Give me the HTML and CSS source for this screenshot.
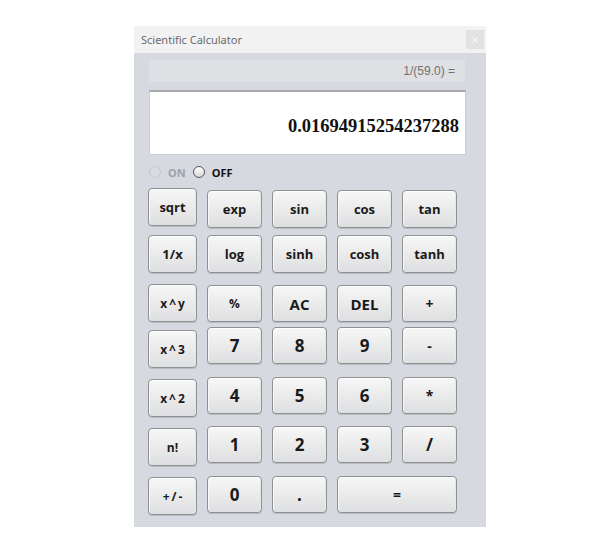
FILE: index.html
```html
<!DOCTYPE html>
<html>
<head>
<meta charset="utf-8">
<link rel="stylesheet" href="styles.css">
</head>
<body>
<div class="window">
  <div class="titlebar">
    <span class="title">Scientific Calculator</span>
    <span class="close">×</span>
  </div>
  <div class="content">
    <div class="expr">1/(59.0) =</div>
    <div class="display">0.01694915254237288</div>
    <div class="power">
      <span class="radio disabled"></span><span class="lbl off-lbl">ON</span>
      <span class="radio"></span><span class="lbl">OFF</span>
    </div>
    <div class="keys">
      <div class="col-left">
        <button class="btn f13">sqrt</button>
        <button class="btn f13">1/x</button>
        <button class="btn f12 spaced">x^y</button>
        <button class="btn f12 spaced">x^3</button>
        <button class="btn f12 spaced">x^2</button>
        <button class="btn f12">n!</button>
        <button class="btn f12 spaced">+/-</button>
      </div>
      <div class="grid">
        <button class="btn f13">exp</button>
        <button class="btn f13">sin</button>
        <button class="btn f13">cos</button>
        <button class="btn f13">tan</button>
        <button class="btn f13">log</button>
        <button class="btn f13">sinh</button>
        <button class="btn f13">cosh</button>
        <button class="btn f13">tanh</button>
        <button class="btn f12">%</button>
        <button class="btn f15">AC</button>
        <button class="btn f15">DEL</button>
        <button class="btn f14">+</button>
        <button class="btn f16">7</button>
        <button class="btn f16">8</button>
        <button class="btn f16">9</button>
        <button class="btn f14">-</button>
        <button class="btn f16">4</button>
        <button class="btn f16">5</button>
        <button class="btn f16">6</button>
        <button class="btn f14">*</button>
        <button class="btn f16">1</button>
        <button class="btn f16">2</button>
        <button class="btn f16">3</button>
        <button class="btn f16">/</button>
        <button class="btn f16">0</button>
        <button class="btn f16">.</button>
        <button class="btn f14 wide">=</button>
      </div>
    </div>
  </div>
</div>
</body>
</html>
```

FILE: styles.css
```css
html, body {
  margin: 0;
  padding: 0;
  background: #ffffff;
}

.window {
  margin-left: 134px;
  margin-top: 26px;
  width: 352px;
  font-family: "Open Sans", "Noto Sans", sans-serif;
}

.titlebar {
  height: 27px;
  background: #f2f2f2;
  display: flex;
  align-items: center;
  justify-content: space-between;
  padding-left: 7px;
  padding-right: 2px;
  box-sizing: border-box;
}

.title {
  font-family: "Noto Sans", "Open Sans", sans-serif;
  font-size: 11px;
  color: #6a6a6a;
}

.close {
  width: 18px;
  height: 19px;
  background: #e2e2e2;
  color: #f4f4f4;
  font-size: 13px;
  line-height: 19px;
  text-align: center;
  font-family: "DejaVu Sans", sans-serif;
}

.content {
  background: #d6d9df;
  height: 474px;
  padding: 7px 0 0 15px;
  box-sizing: border-box;
}

.expr {
  width: 316px;
  height: 22px;
  background: #dfe0e4;
  box-sizing: border-box;
  text-align: right;
  padding-right: 10px;
  font-family: "Liberation Sans", Arial, sans-serif;
  font-size: 12px;
  line-height: 22px;
  color: #707070;
}

.display {
  margin-top: 8px;
  width: 317px;
  height: 65px;
  box-sizing: border-box;
  background: #ffffff;
  border: 1px solid #c9cbcf;
  border-top: 2px solid #a6a7aa;
  text-align: right;
  padding-right: 6px;
  padding-top: 23px;
  font-family: "Liberation Serif", "Times New Roman", serif;
  font-weight: bold;
  font-size: 18.5px;
  color: #111;
  line-height: 22px;
}

.power {
  margin-top: 11px;
  height: 12px;
  display: flex;
  align-items: center;
  font-size: 11px;
  font-weight: bold;
}

.radio {
  width: 12px;
  height: 12px;
  border-radius: 50%;
  box-sizing: border-box;
  border: 1px solid #555;
  background: linear-gradient(#ffffff, #d8d8d8);
  margin-right: 7px;
}

.radio.disabled {
  border-color: #c6c7ca;
  background: #d9dbe0;
}

.lbl {
  color: #111;
}

.off-lbl {
  color: #a0a2a6;
  margin-right: 7px;
}

.keys {
  margin-top: 10px;
  margin-left: -1px;
  display: flex;
  gap: 10px;
  align-items: flex-start;
}

.col-left {
  display: grid;
  grid-template-columns: 49px;
  grid-template-rows: 47px 49px 46px 49px 49px 49px 38px;
}

.grid {
  margin-top: 2px;
  display: grid;
  grid-template-columns: repeat(4, 55px);
  column-gap: 10px;
  grid-template-rows: 45px 50px 42px 50px 49px 50px 37px;
}

.btn {
  height: 37px;
  margin: 0;
  padding: 0;
  box-sizing: border-box;
  border: 1px solid #8f9092;
  border-radius: 4px;
  background: linear-gradient(#f7f7f7 0%, #ececec 45%, #dedfe1 100%);
  box-shadow: inset 0 1px 0 #ffffff, inset 1px 0 0 #f8f8f8, inset -1px 0 0 #e8e8e8, 0 1px 0 #b9bbbf;
  font-family: "Open Sans", "Noto Sans", sans-serif;
  font-weight: bold;
  color: #1a1a1a;
  text-align: center;
}

.col-left .btn {
  height: 38px;
}

.grid .btn:nth-child(-n+8) {
  height: 38px;
}

.spaced {
  letter-spacing: 2px;
  text-indent: 2px;
}

.wide {
  grid-column: span 2;
}

.f11 { font-size: 11px; }
.f12 { font-size: 12px; }
.f13 { font-size: 13px; }
.f14 { font-size: 14px; }
.f15 { font-size: 15px; }
.f16 { font-size: 17px; }
```
